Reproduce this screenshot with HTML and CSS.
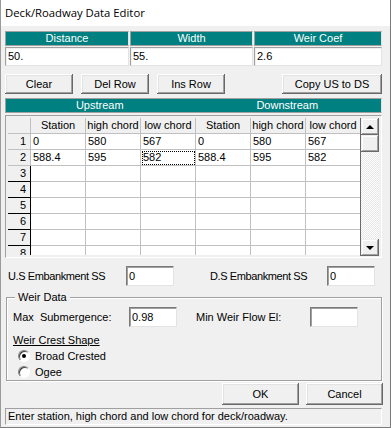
FILE: index.html
```html
<!DOCTYPE html>
<html>
<head>
<meta charset="utf-8">
<link rel="stylesheet" href="styles.css">
</head>
<body>
<div class="win">
  <div class="title">Deck/Roadway Data Editor</div>
  <div class="body">
    <div class="top3">
      <div class="hdr">Distance</div>
      <div class="hdr">Width</div>
      <div class="hdr">Weir Coef</div>
      <div class="field">50.</div>
      <div class="field">55.</div>
      <div class="field">2.6</div>
    </div>

    <div class="btnrow">
      <div class="btn sm">Clear</div>
      <div class="btn sm">Del Row</div>
      <div class="btn sm">Ins Row</div>
      <div class="spacer"></div>
      <div class="btn copy">Copy US to DS</div>
    </div>

    <div class="usds">
      <div class="half">Upstream</div>
      <div class="half">Downstream</div>
    </div>

    <div class="gridframe">
      <div class="table">
        <div class="ch corner"></div>
        <div class="ch">Station</div>
        <div class="ch"><span>high chord</span></div>
        <div class="ch"><span>low chord</span></div>
        <div class="ch">Station</div>
        <div class="ch"><span>high chord</span></div>
        <div class="ch"><span>low chord</span></div>

        <div class="rh">1</div>
        <div class="c">0</div><div class="c">580</div><div class="c">567</div>
        <div class="c">0</div><div class="c">580</div><div class="c">567</div>

        <div class="rh">2</div>
        <div class="c">588.4</div><div class="c">595</div><div class="c focus">582</div>
        <div class="c">588.4</div><div class="c">595</div><div class="c">582</div>

        <div class="rh dark">3</div>
        <div class="c"></div><div class="c"></div><div class="c"></div><div class="c"></div><div class="c"></div><div class="c"></div>
        <div class="rh dark">4</div>
        <div class="c"></div><div class="c"></div><div class="c"></div><div class="c"></div><div class="c"></div><div class="c"></div>
        <div class="rh dark">5</div>
        <div class="c"></div><div class="c"></div><div class="c"></div><div class="c"></div><div class="c"></div><div class="c"></div>
        <div class="rh dark">6</div>
        <div class="c"></div><div class="c"></div><div class="c"></div><div class="c"></div><div class="c"></div><div class="c"></div>
        <div class="rh dark">7</div>
        <div class="c"></div><div class="c"></div><div class="c"></div><div class="c"></div><div class="c"></div><div class="c"></div>
        <div class="rh dark">8</div>
        <div class="c"></div><div class="c"></div><div class="c"></div><div class="c"></div><div class="c"></div><div class="c"></div>
      </div>
      <div class="vscroll">
        <div class="sbtn"><span class="tri up"></span></div>
        <div class="thumb"></div>
        <div class="track"></div>
        <div class="sbtn"><span class="tri down"></span></div>
      </div>
    </div>

    <div class="emb">
      <div class="lbl us">U.S Embankment SS</div>
      <div class="edit">0</div>
      <div class="lbl ds">D.S Embankment SS</div>
      <div class="edit">0</div>
    </div>

    <div class="group">
      <div class="legend">Weir Data</div>
      <div class="subrow">
        <div class="lbl sub">Max&nbsp; Submergence:</div>
        <div class="edit">0.98</div>
        <div class="lbl minw">Min Weir Flow El:</div>
        <div class="edit"></div>
      </div>
      <div class="crest">Weir Crest Shape</div>
      <div class="radio first"><span class="rb on"></span>Broad Crested</div>
      <div class="radio"><span class="rb"></span>Ogee</div>
    </div>

    <div class="okrow">
      <div class="btn ok">OK</div>
      <div class="btn ok">Cancel</div>
    </div>

    <div class="status">Enter station, high chord and low chord for deck/roadway.</div>
  </div>
</div>
</body>
</html>
```

FILE: styles.css
```css
html, body {
  margin: 0;
  padding: 0;
  background: #f0f0f0;
}
.win {
  width: 391px;
  height: 428px;
  box-sizing: border-box;
  border-left: 1px solid #9a9a9a;
  border-right: 1px solid #7a7a7a;
  border-bottom: 1px solid #7a7a7a;
  background: #f0f0f0;
  font-family: "Liberation Sans", Arial, sans-serif;
  font-size: 11px;
  color: #000;
  overflow: hidden;
}
.title {
  height: 26px;
  background: #fff;
  padding-left: 4px;
  font-family: "Open Sans", "Noto Sans", sans-serif;
  font-size: 11.3px;
  line-height: 26px;
}
.body {
  padding: 0 8px 0 4px;
}
.top3 {
  margin-top: 5px;
  display: grid;
  grid-template-columns: 124px 123px 1fr;
  column-gap: 1px;
  row-gap: 1px;
}
.hdr {
  height: 15px;
  box-sizing: border-box;
  background: #008080;
  color: #fff;
  text-align: center;
  line-height: 13px;
  border: 1px solid;
  border-color: #a0a0a0 #e3e3e3 #a0a0a0 #a0a0a0;
}
.field {
  height: 19px;
  box-sizing: border-box;
  background: #fff;
  border: 1px solid;
  border-color: #a0a0a0 #e3e3e3 #e3e3e3 #a0a0a0;
  box-shadow: inset 1px 1px 0 #f0f0f0;
  padding-left: 2px;
  line-height: 17px;
}
.btnrow {
  margin-top: 8px;
  display: flex;
  gap: 8px;
  height: 20px;
}
.btn {
  box-sizing: border-box;
  background: #f0f0f0;
  text-align: center;
  box-shadow: inset -1px -1px 0 #696969, inset 1px 1px 0 #fff, inset -2px -2px 0 #a0a0a0, inset 2px 2px 0 #e3e3e3;
}
.btn.sm {
  width: 68px;
  line-height: 20px;
}
.spacer { flex: 1; }
.btn.copy {
  width: 100px;
  line-height: 20px;
}
.usds {
  margin-top: 4px;
  height: 15px;
  display: flex;
  background: #008080;
  color: #fff;
  box-sizing: border-box;
  border: 1px solid;
  border-color: #a0a0a0 #e3e3e3 #a0a0a0 #a0a0a0;
  line-height: 13px;
}
.half {
  flex: 1;
  text-align: center;
}
.gridframe {
  margin-top: 2px;
  height: 143px;
  box-sizing: border-box;
  border: 1px solid;
  border-color: #a0a0a0 #fff #fff #a0a0a0;
  padding: 2px 2px 1px 2px;
  display: flex;
  background: #f0f0f0;
}
.table {
  display: grid;
  grid-template-columns: 23px repeat(6, 55px);
  grid-auto-rows: 16px;
  height: 137px;
  overflow: hidden;
  background: #fff;
}
.table > div {
  box-sizing: border-box;
  border-right: 1px solid #c0c0c0;
  border-bottom: 1px solid #c0c0c0;
  overflow: hidden;
  white-space: nowrap;
  line-height: 15px;
}
.ch {
  background: #f0f0f0;
  display: flex;
  justify-content: center;
}
.ch span { flex: none; }
.rh {
  background: #f0f0f0;
  text-align: right;
  padding-right: 4px;
}
.table > .rh.dark {
  border-right-color: #000;
  border-bottom-color: #000;
}
.c {
  padding-left: 2px;
}
.c.focus {
  outline: 1px dotted #000;
  outline-offset: -2px;
}
.vscroll {
  width: 18px;
  display: flex;
  flex-direction: column;
  border-left: 1px solid #696969;
  height: 138px;
}
.sbtn {
  height: 17px;
  background: #f0f0f0;
  box-shadow: inset -1px -1px 0 #696969, inset 1px 1px 0 #f0f0f0, inset -2px -2px 0 #a0a0a0, inset 2px 2px 0 #fff;
  display: flex;
  align-items: center;
  justify-content: center;
}
.thumb {
  height: 17px;
  background: #f0f0f0;
  box-shadow: inset -1px -1px 0 #696969, inset 1px 1px 0 #f0f0f0, inset -2px -2px 0 #a0a0a0, inset 2px 2px 0 #fff;
}
.track {
  flex: 1;
  background: repeating-conic-gradient(#fff 0 25%, #e6e6e6 0 50%) 0 0 / 2px 2px;
}
.tri {
  width: 0;
  height: 0;
  border-left: 4px solid transparent;
  border-right: 4px solid transparent;
}
.tri.up { border-bottom: 4px solid #000; }
.tri.down { border-top: 4px solid #000; }

.emb {
  margin-top: 8px;
  height: 20px;
  display: flex;
  align-items: center;
}
.lbl { white-space: nowrap; }
.lbl.us { width: 121px; padding-left: 3px; box-sizing: border-box; letter-spacing: -0.4px; }
.lbl.ds { width: 153px; padding-left: 36px; box-sizing: border-box; letter-spacing: -0.4px; }
.edit {
  width: 48px;
  height: 20px;
  box-sizing: border-box;
  background: #fff;
  border: 1px solid;
  border-color: #7a7a7a #e3e3e3 #e3e3e3 #7a7a7a;
  box-shadow: inset 1px 1px 0 #a0a0a0;
  padding-left: 2px;
  line-height: 18px;
}
.group {
  margin-top: 11px;
  margin-left: 1px;
  height: 84px;
  box-sizing: border-box;
  border: 1px solid #a0a0a0;
  box-shadow: inset 1px 1px 0 #fff, 1px 1px 0 #fff;
  padding-left: 6px;
}
.legend {
  margin-top: -7px;
  margin-left: 2px;
  width: fit-content;
  padding: 0 3px;
  background: #f0f0f0;
  line-height: 13px;
}
.subrow {
  margin-top: 3px;
  display: flex;
  align-items: center;
  height: 20px;
}
.lbl.sub { width: 116px; }
.lbl.minw { width: 133px; padding-left: 19px; box-sizing: border-box; }
.crest {
  margin-top: 7px;
  text-decoration: underline;
  line-height: 13px;
}
.radio {
  display: flex;
  align-items: center;
  height: 16px;
  padding-left: 5px;
  gap: 5px;
}
.radio.first { margin-top: 1px; }
.rb {
  width: 12px;
  height: 12px;
  box-sizing: border-box;
  border-radius: 50%;
  border: 1px solid;
  border-color: #808080 #fff #fff #808080;
  background: #fff;
  box-shadow: inset 1px 1px 0 #404040;
  display: flex;
  align-items: center;
  justify-content: center;
}
.rb.on::after {
  content: "";
  width: 4px;
  height: 4px;
  border-radius: 50%;
  background: #000;
}
.okrow {
  margin-top: 2px;
  margin-right: -1px;
  display: flex;
  justify-content: flex-end;
  gap: 7px;
  height: 22px;
}
.btn.ok {
  width: 77px;
  line-height: 22px;
}
.status {
  margin-top: 3px;
  height: 17px;
  box-sizing: border-box;
  border: 1px solid;
  border-color: #a0a0a0 #fff #fff #a0a0a0;
  padding-left: 2px;
  line-height: 15px;
  white-space: nowrap;
}
```
